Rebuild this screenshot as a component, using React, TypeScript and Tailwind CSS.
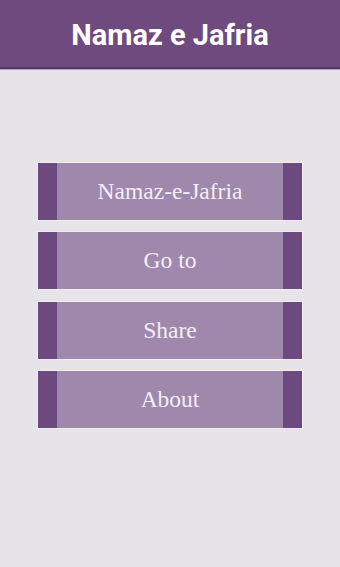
const items = ["Namaz-e-Jafria", "Go to", "Share", "About"];

function MenuButton({ label }: { label: string }) {
  return (
    <button className="flex h-[59px] w-[266px] border border-[#f1eef3] bg-[#a088ad]">
      <span className="w-[19px] shrink-0 bg-[#6c4a7f]" />
      <span className="flex flex-1 items-center justify-center font-['Liberation_Serif',serif] text-[23.5px] text-[#f3eff5]">
        {label}
      </span>
      <span className="w-[19px] shrink-0 bg-[#6c4a7f]" />
    </button>
  );
}

export default function App() {
  return (
    <div className="flex h-[567px] w-[340px] flex-col bg-[#e7e4e9]">
      <header className="flex h-[69px] shrink-0 items-center justify-center border-b-2 border-[#5a2f6f] bg-[#6e4a7e] pt-[4px]">
        <h1 className="font-['Roboto',sans-serif] text-[29px] font-bold text-white">Namaz e Jafria</h1>
      </header>
      <div className="h-px shrink-0 bg-[#b59dc1]" />
      <nav className="flex flex-col items-center gap-[10.4px] pt-[92px]">
        {items.map((item) => (
          <MenuButton key={item} label={item} />
        ))}
      </nav>
    </div>
  );
}
